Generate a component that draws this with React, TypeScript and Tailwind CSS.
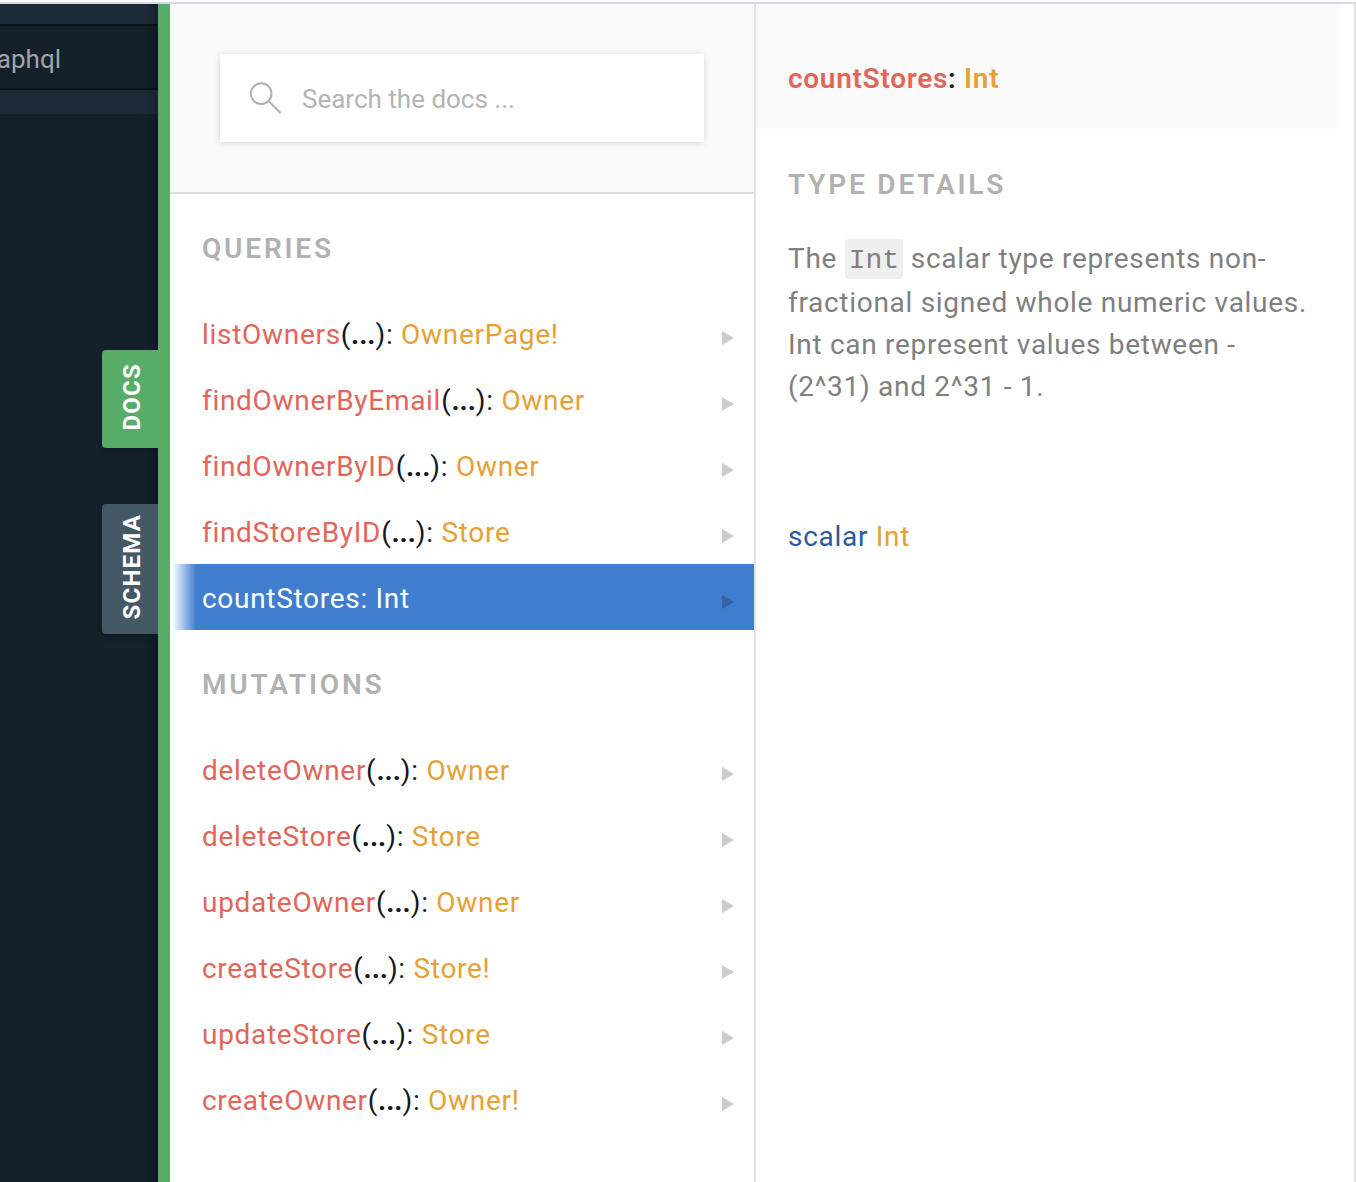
type Field = { name: string; type: string; args?: boolean; active?: boolean };

const queries: Field[] = [
  { name: "listOwners", type: "OwnerPage!", args: true },
  { name: "findOwnerByEmail", type: "Owner", args: true },
  { name: "findOwnerByID", type: "Owner", args: true },
  { name: "findStoreByID", type: "Store", args: true },
  { name: "countStores", type: "Int", active: true },
];

const mutations: Field[] = [
  { name: "deleteOwner", type: "Owner", args: true },
  { name: "deleteStore", type: "Store", args: true },
  { name: "updateOwner", type: "Owner", args: true },
  { name: "createStore", type: "Store!", args: true },
  { name: "updateStore", type: "Store", args: true },
  { name: "createOwner", type: "Owner!", args: true },
];

function Arrow() {
  return (
    <svg viewBox="0 0 12 14" className="mt-1.5 h-3.5 w-3 shrink-0 fill-black/20" aria-hidden="true">
      <path d="M0 0L12 7L0 14Z" />
    </svg>
  );
}

function FieldRow({ field }: { field: Field }) {
  return (
    <li>
      <button
        type="button"
        className={
          field.active
            ? "flex h-[66px] w-full items-center justify-between bg-linear-to-r from-white from-[2px] to-[#417dcf] to-[26px] pt-1 pr-5 pl-8 text-left text-white"
            : "flex h-[66px] w-full items-center justify-between pt-1 pr-5 pl-8 text-left text-[#141823]"
        }
      >
        <span className="tracking-wide">
          <span className={field.active ? "" : "text-[#e1665a]"}>{field.name}</span>
          {field.args && (
            <>
              (<b className="tracking-normal">...</b>)
            </>
          )}
          {": "}
          <span className={field.active ? "" : "text-[#e5a135]"}>{field.type}</span>
        </span>
        <Arrow />
      </button>
    </li>
  );
}

function Section({ title, fields }: { title: string; fields: Field[] }) {
  return (
    <section>
      <h2 className="px-8 pt-[33px] pb-[29px] leading-[44px] font-semibold tracking-widest text-[#b1b1b1]">{title}</h2>
      <ul>
        {fields.map((f) => (
          <FieldRow key={f.name} field={f} />
        ))}
      </ul>
    </section>
  );
}

export default function App() {
  return (
    <div className="flex min-h-screen flex-col bg-white font-['Roboto',sans-serif] text-[28px] leading-[42px]">
      <div className="h-1 shrink-0 border-b-2 border-[#d8d6e8]" />
      <div className="flex grow">
        <aside className="relative flex w-[158px] shrink-0 flex-col bg-[#15202b]">
          <div className="h-5 bg-[#1d2b39]" />
          <div className="flex h-[66px] items-center justify-end overflow-hidden border-y-2 border-[#0b1319] pt-1 pr-[97px] text-[26px] text-[#a0a5a9]">
            <span className="whitespace-nowrap">graphql</span>
          </div>
          <div className="h-6 bg-[#1d2b39]" />
          <div className="absolute inset-y-0 right-0 w-4 bg-linear-to-l from-black/20 to-transparent" />
          <div className="relative mt-[236px] flex flex-col items-end gap-14 text-2xl font-bold tracking-wider text-white">
            <button type="button" className="flex h-[98px] w-14 items-center justify-center rounded-l bg-[#57ad68] pb-1 pl-1 shadow-md">
              <span className="rotate-180 leading-7 [writing-mode:vertical-rl]">DOCS</span>
            </button>
            <button type="button" className="flex h-[130px] w-14 items-center justify-center rounded-l bg-[#455866] pb-1 pl-1 shadow-md">
              <span className="rotate-180 leading-7 [writing-mode:vertical-rl]">SCHEMA</span>
            </button>
          </div>
        </aside>
        <div className="relative w-3 shrink-0 bg-[#57ad68]" />
        <main className="flex min-w-0 flex-1">
          <div className="min-w-0 flex-1 border-r-2 border-[#e3e3e3]">
            <div className="border-b-2 border-[#dedede] bg-[#fafafa] p-[50px]">
              <label className="flex h-[88px] items-center gap-5 bg-white px-[30px] shadow-[0_1px_6px_rgba(0,0,0,0.15)]">
                <svg viewBox="0 0 33 33" className="size-8 shrink-0 fill-none stroke-[#b0b0b0]" strokeWidth="2" aria-hidden="true">
                  <circle cx="11.5" cy="12" r="10.7" />
                  <path d="M19 19.5L31.5 32" />
                </svg>
                <input
                  type="text"
                  aria-label="Search the docs"
                  placeholder="Search the docs ..."
                  className="min-w-0 flex-1 pt-0.5 text-[26px] text-[#141823] outline-none placeholder:text-[#b4b4b4]"
                />
              </label>
            </div>
            <Section title="QUERIES" fields={queries} />
            <Section title="MUTATIONS" fields={mutations} />
          </div>
          <div className="min-w-0 flex-1">
            <h1 className="bg-[#fafafa] px-8 pt-[54px] pb-[29px] font-semibold tracking-wide text-[#141823]">
              <span className="text-[#e1665a]">countStores</span>: <span className="text-[#e5a135]">Int</span>
            </h1>
            <h2 className="px-8 pt-[35px] pb-8 font-semibold tracking-widest text-[#b1b1b1]">TYPE DETAILS</h2>
            <p className="px-8 tracking-wide text-[#7f7f7f]">
              The{" "}
              <code className="rounded bg-[#efefef] px-1 pt-1.5 pb-[3px] font-['Liberation_Mono',monospace] text-[28px] tracking-normal">
                Int
              </code>{" "}
              scalar type represents non-fractional signed whole numeric values. Int can represent values between -(2^31) and 2^31 - 1.
            </p>
            <p className="px-8 pt-[108px] tracking-wide text-[#2a5aa0]">
              scalar <span className="text-[#e5a135]">Int</span>
            </p>
          </div>
          <div className="w-4 shrink-0 border-r-2 border-[#e3e3e3]" />
        </main>
      </div>
    </div>
  );
}
